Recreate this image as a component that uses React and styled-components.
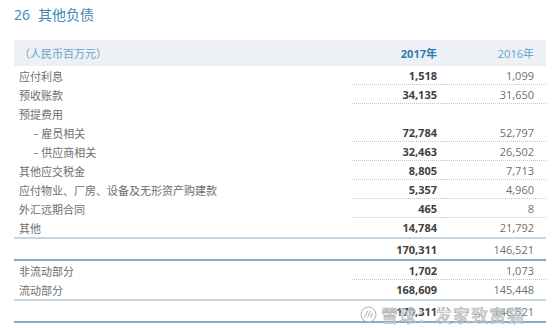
import React from 'react';
import styled, { createGlobalStyle } from 'styled-components';

const GlobalStyle = createGlobalStyle`
  html, body {
    margin: 0;
    padding: 0;
    background: #ffffff;
  }
  body {
    font-family: "Open Sans", "Noto Sans CJK SC", sans-serif;
  }
`;

const Page = styled.div`
  width: 556px;
  height: 328px;
  padding: 6px 10px 0 14px;
  box-sizing: border-box;
  overflow: hidden;
  position: relative;
`;

const Title = styled.h2`
  margin: 0;
  height: 34px;
  display: flex;
  align-items: flex-start;
  gap: 8px;
  font-weight: 400;
  font-size: 14px;
  line-height: 18px;
  color: #3d87b6;
  font-family: "Open Sans", "Noto Sans CJK SC", sans-serif;
`;

const Table = styled.div`
  width: 532px;
  display: flex;
  flex-direction: column;
`;

const Row = styled.div`
  display: grid;
  grid-template-columns: 338px 93px 101px;
  align-items: center;
  height: ${(p) => p.$h || 19}px;
  box-sizing: border-box;
  border-top: ${(p) =>
    p.$rule === 'light' ? '2px solid #c4d6e1' : p.$rule === 'dark' ? '2px solid #86aac4' : 'none'};
`;

const HeaderRow = styled(Row)`
  background: #edf1f6;
  height: 26px;
`;

const Label = styled.div`
  font-family: "Noto Sans CJK SC", sans-serif;
  font-size: 11px;
  color: ${(p) => (p.$head ? '#6aa3c4' : '#6e6e6e')};
  padding-left: ${(p) => (p.$indent ? 19 : 5)}px;
  white-space: nowrap;
`;

const Cell = styled.div`
  height: 100%;
  display: flex;
  align-items: center;
  justify-content: flex-end;
  padding-right: ${(p) => (p.$cur ? 8 : 12)}px;
  box-sizing: border-box;
  font-size: 11px;
  font-weight: ${(p) => (p.$cur ? 700 : 400)};
  color: ${(p) => (p.$cur ? '#3f3f3f' : '#707070')};
  border-bottom: ${(p) => (p.$dots ? '1px dotted #bcc6cd' : 'none')};
`;

const HeadCell = styled(Cell)`
  font-family: "Open Sans", "Noto Sans CJK SC", sans-serif;
  color: ${(p) => (p.$cur ? '#2f7db0' : '#62a2c9')};
`;

const BottomRule = styled.div`
  height: 2px;
  background: #86aac4;
`;

const Watermark = styled.div`
  position: absolute;
  left: 360px;
  top: 302px;
  display: flex;
  align-items: center;
  gap: 4px;
  font-family: "Noto Sans CJK SC", sans-serif;
  font-size: 17px;
  letter-spacing: 1px;
  color: rgba(255, 255, 255, 0.75);
  -webkit-text-stroke: 0.7px #a9afb4;
  pointer-events: none;
`;

const rows = [
  { label: '应付利息', a: '1,518', b: '1,099', dots: true },
  { label: '预收账款', a: '34,135', b: '31,650', dots: true },
  { label: '预提费用' },
  { label: '– 雇员相关', a: '72,784', b: '52,797', dots: true, indent: true },
  { label: '– 供应商相关', a: '32,463', b: '26,502', dots: true, indent: true },
  { label: '其他应交税金', a: '8,805', b: '7,713', dots: true },
  { label: '应付物业、厂房、设备及无形资产购建款', a: '5,357', b: '4,960', dots: true },
  { label: '外汇远期合同', a: '465', b: '8', dots: true },
  { label: '其他', a: '14,784', b: '21,792' },
];

const App = () => {
  return (
    <Page>
      <GlobalStyle />
      <Title>
        <span>26</span>
        <span>其他负债</span>
      </Title>

      <Table>
        <HeaderRow>
          <Label $head>（人民币百万元）</Label>
          <HeadCell $cur>2017年</HeadCell>
          <HeadCell>2016年</HeadCell>
        </HeaderRow>

        {rows.map((r) => (
          <Row key={r.label}>
            <Label $indent={r.indent}>{r.label}</Label>
            <Cell $cur $dots={r.dots}>{r.a}</Cell>
            <Cell $dots={r.dots}>{r.b}</Cell>
          </Row>
        ))}

        <Row $rule="light" $h={22}>
          <Label />
          <Cell $cur>170,311</Cell>
          <Cell>146,521</Cell>
        </Row>
        <Row $rule="dark" $h={21}>
          <Label>非流动部分</Label>
          <Cell $cur $dots>1,702</Cell>
          <Cell $dots>1,073</Cell>
        </Row>
        <Row $h={19}>
          <Label>流动部分</Label>
          <Cell $cur>168,609</Cell>
          <Cell>145,448</Cell>
        </Row>
        <Row $rule="light" $h={22}>
          <Label />
          <Cell $cur>170,311</Cell>
          <Cell>146,521</Cell>
        </Row>
        <BottomRule />
      </Table>

      <Watermark>
        <svg width="17" height="17" viewBox="0 0 17 17" fill="none" stroke="#a9afb4" strokeWidth="1">
          <circle cx="8.5" cy="8.5" r="7.5" fill="rgba(255,255,255,0.7)" />
          <path d="M4.5 11.5 L7.5 5 M7.5 11.5 L10.5 5 M10.5 11.5 L12.5 7" />
        </svg>
        <span>雪球：发家致富猫</span>
      </Watermark>
    </Page>
  );
};

export default App;
